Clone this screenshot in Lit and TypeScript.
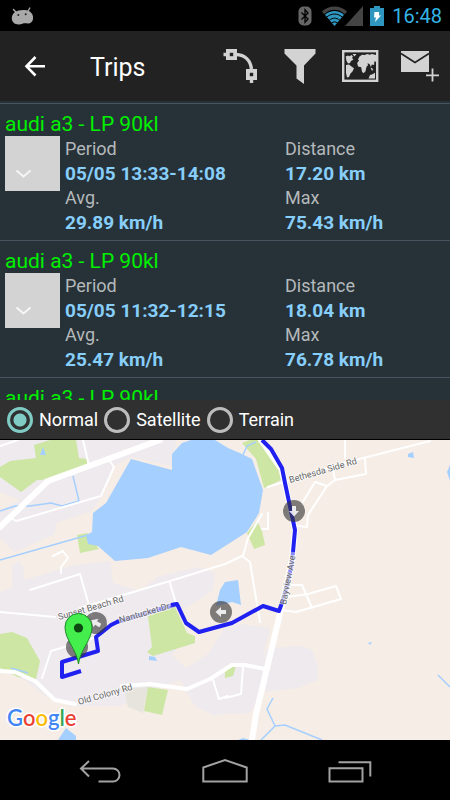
import { LitElement, html, css, svg } from "lit";
import { customElement, property, state } from "lit/decorators.js";

interface Trip {
  vehicle: string;
  period: string;
  distance: string;
  avg: string;
  max: string;
}

const TRIPS: Trip[] = [
  { vehicle: "audi a3 - LP 90kl", period: "05/05 13:33-14:08", distance: "17.20 km", avg: "29.89 km/h", max: "75.43 km/h" },
  { vehicle: "audi a3 - LP 90kl", period: "05/05 11:32-12:15", distance: "18.04 km", avg: "25.47 km/h", max: "76.78 km/h" },
  { vehicle: "audi a3 - LP 90kl", period: "", distance: "", avg: "", max: "" },
];

@customElement("status-bar")
export class StatusBar extends LitElement {
  static styles = css`
    :host { display: flex; align-items: center; height: 31px; padding: 0 8px 0 11px; background: #000; flex: none; }
    svg { display: block; flex: none; }
    .space { flex: 1; }
    .bt { margin-right: 10px; }
    .net { margin-right: 7px; }
    .bat { margin-right: 8px; }
    .clock { font: 20px/31px Roboto, sans-serif; color: #33b5e5; padding-top: 2px; }
  `;
  render() {
    return html`
      <svg width="23" height="20" viewBox="0 0 23 20" aria-hidden="true">
        <path d="M2.5 3.5 4.8 6M18.8 2 16.8 5.5" stroke="#a9a9a9" stroke-width="1.4" stroke-linecap="round" />
        <path d="M4 6C7 3.8 14 3.3 18 5c3 1.500 4.500 4.500 4 8-.5 3-2.500 4.600-5 4.500-1.500 0-2.500-.3-4-.2-1.500.3-3 1.400-5.500 1.200C3.500 18.300.8 16 .8 12 .8 9.500 2 7.500 4 6z" fill="#a9a9a9" />
        <circle cx="7.300" cy="9" r="1" fill="#222" /><circle cx="14.700" cy="8.300" r="1" fill="#222" />
      </svg>
      <span class="space"></span>
      <svg class="bt" width="14" height="20" viewBox="0 0 14 20" aria-hidden="true">
        <rect x=".5" y=".5" width="13" height="19" rx="5" fill="#666" />
        <path d="M3.500 6.500 10 13 7 16.300V3.700L10 7l-6.500 6.500" fill="none" stroke="#000" stroke-width="1.300" />
      </svg>
      <svg class="net" width="41" height="20" viewBox="0 0 41 20" aria-hidden="true">
        <path d="M0 5.500C7-1.200 18-1.200 25 5.500l-2.200 2.700C16.500 2.300 8.500 2.300 2.200 8.200z" fill="#444" />
        <path d="M3 8.700C8.500 3.800 16.500 3.800 22 8.700L12.500 20z" fill="#2f97bf" />
        <path d="M4.500 11.200c5-4.200 11-4.200 16 0M7.200 14.200c3.500-2.700 7-2.700 10.600 0M9.500 17c2-1.500 4-1.500 6 0" fill="none" stroke="#000" stroke-width="1" />
        <path d="M23 20 41 0v20z" fill="#444" />
      </svg>
      <svg class="bat" width="14" height="20" viewBox="0 0 14 20" aria-hidden="true">
        <path d="M4 0h6v2h4v18H0V2h4z" fill="#2f97bf" />
        <path d="M4.500 6h4.500v3.500h2L5 16l1-4.500H4z" fill="#fff" />
      </svg>
      <span class="clock">16:48</span>
    `;
  }
}

@customElement("app-header")
export class AppHeader extends LitElement {
  static styles = css`
    :host { display: flex; align-items: center; height: 70px; background: #222; flex: none; }
    button { border: 0; padding: 0; background: none; display: block; flex: none; height: 70px; }
    svg { display: block; }
    .back { width: 70px; }
    h1 { margin: 0; padding-left: 20px; flex: 1; font: 25px/32px Roboto, sans-serif; color: #fff; padding-top: 4px; }
  `;
  render() {
    return html`
      <button class="back" aria-label="Back">
        <svg width="70" height="70" viewBox="0 0 70 70">
          <path d="M45 35.300H27M35.500 26 26.500 35.300l9 9.200" fill="none" stroke="#fff" stroke-width="2.600" />
        </svg>
      </button>
      <h1>Trips</h1>
      <button aria-label="Route">
        <svg width="60" height="70" viewBox="0 0 60 70">
          <path d="M13.500 23.500h5M26 23.500c9 .3 14.500 6 15.500 14.500M41.500 48v4" fill="none" stroke="#d3d3d3" stroke-width="3.400" />
          <rect x="17.900" y="19.900" width="7.200" height="7.200" fill="none" stroke="#d3d3d3" stroke-width="3.800" />
          <rect x="37.900" y="39.900" width="7.200" height="7.200" fill="none" stroke="#d3d3d3" stroke-width="3.800" />
        </svg>
      </button>
      <button aria-label="Filter">
        <svg width="60" height="70" viewBox="0 0 60 70">
          <path d="M14.500 18h31v4.500L34 34.500V53l-7.500-5.500v-13L14.500 22.500z" fill="#d3d3d3" />
        </svg>
      </button>
      <button aria-label="Map">
        <svg width="60" height="70" viewBox="0 0 60 70">
          <rect x="13.200" y="20.200" width="34" height="29.600" fill="none" stroke="#d3d3d3" stroke-width="2.400" />
          <path d="M15.700 25.500 18 24.500l1.500.8 2-1.300 1.500 1.500-1 1.500 1.500 1.500-2.500 1.500-1 2-2 .5-1.500-2.500zM22.500 23h4l-2 2.500zM16 34l3-.5 2.500 2 2.500 1.800-1.500 3.200-2 2-1.500 3.500-2 .5-1-4.500zM28 28.500l1.500-3 2.500-1.800 2.500.3 3-1 2 .8 2.500-.8 4 1v7l-1.500-1-.5 4-2.200-.5-.8 2.500-1.500-3-2-.8.5 2-1.500 1.500-1 4.500-2 2-1.500-1.500-.8-4.500-3.200-.7-.8-3.500 1.800-2.500zM40.500 36.500l1.800.8 1 2-1.500.3zM38.500 47.500l1.500-3.500 2.500-.8 2.500-1.500v5.800z" fill="#d3d3d3" />
        </svg>
      </button>
      <button aria-label="New message">
        <svg width="60" height="70" viewBox="0 0 60 70">
          <path d="M11 20h28v21H11z" fill="#d3d3d3" />
          <path d="M11 22.500 25 31.500l14-9" fill="none" stroke="#222" stroke-width="1.600" />
          <path d="M42.500 37.500v13M36 44.300h13" stroke="#222" stroke-width="5" />
          <path d="M42.500 37.500v13M36 44.300h13" stroke="#d3d3d3" stroke-width="1.800" />
        </svg>
      </button>
    `;
  }
}

@customElement("trip-item")
export class TripItem extends LitElement {
  @property({ attribute: false }) trip!: Trip;
  static styles = css`
    :host { display: block; border-top: 1px solid #465560; padding: 8px 0 5px 5px; font-family: Roboto, sans-serif; }
    h2 { margin: 0; font-size: 21px; line-height: 24px; font-weight: 400; color: #00f000; }
    .body { display: flex; gap: 5px; }
    .thumb { width: 55px; height: 55px; flex: none; padding: 0; border: 0; background: #d3d3d3; }
    .thumb svg { display: block; }
    dl { flex: 1; margin: 0; padding-top: 1px; display: grid; grid-template-columns: 4fr 3fr; }
    dt { font-size: 18px; line-height: 24px; color: #b5b9bb; }
    dd { margin: 0; font-size: 19px; line-height: 25px; font-weight: 700; color: #87cefa; }
  `;
  render() {
    const t = this.trip;
    return html`
      <h2>${t.vehicle}</h2>
      ${t.period
        ? html`<div class="body">
            <button class="thumb" aria-label="Details">
              <svg width="55" height="55" viewBox="0 0 55 55">
                <path d="M11.500 34.500 18.500 40.500 25.500 34.500" fill="none" stroke="#f6f6f6" stroke-width="2" />
              </svg>
            </button>
            <dl>
              <div><dt>Period</dt><dd>${t.period}</dd></div>
              <div><dt>Distance</dt><dd>${t.distance}</dd></div>
              <div><dt>Avg.</dt><dd>${t.avg}</dd></div>
              <div><dt>Max</dt><dd>${t.max}</dd></div>
            </dl>
          </div>`
        : null}
    `;
  }
}

@customElement("map-type-bar")
export class MapTypeBar extends LitElement {
  @state() private selected = "Normal";
  static styles = css`
    :host { display: flex; align-items: center; gap: 6px; height: 39px; padding-left: 7px; background: #303030; border-bottom: 1px solid #000; flex: none; }
    label { display: flex; align-items: center; gap: 6px; font: 18px/28px Roboto, sans-serif; color: #fff; }
    input { appearance: none; margin: 0; width: 26px; height: 26px; border: 3px solid #bdbdbd; border-radius: 50%; box-sizing: border-box; }
    input:checked { border-color: #80cbc4; background: radial-gradient(circle, #80cbc4 6px, transparent 7px); }
  `;
  render() {
    return ["Normal", "Satellite", "Terrain"].map(
      (name) => html`<label>
        <input type="radio" name="type" .checked=${this.selected === name} @change=${() => (this.selected = name)} />${name}
      </label>`,
    );
  }
}

const arrow = (x: number, y: number, angle: number) => svg`
  <g transform="translate(${x} ${y}) rotate(${angle})">
    <circle r="11" fill="#333" fill-opacity=".62" />
    <path d="M-5.500 0 0-5v3h5v4H0v3z" fill="#fff" fill-opacity=".85" />
  </g>`;

@customElement("trip-map")
export class TripMap extends LitElement {
  static styles = css`
    :host { display: block; aspect-ratio: 3 / 2; flex: none; background: #f5ede6; }
    svg { display: block; width: 100%; height: 100%; }
    .grey { fill: #eeeaee; }
    .green { fill: #cde6a4; }
    .water { fill: #a5cfff; }
    .stream { fill: none; stroke: #a5cfff; stroke-width: 1.5; }
    .road { fill: none; stroke: #fff; stroke-linejoin: round; stroke-linecap: round; }
    .small { stroke-width: 2; }
    .mid { stroke-width: 4; }
    .big { stroke-width: 6; }
    .route { fill: none; stroke: #2020f0; stroke-width: 4; stroke-linejoin: round; }
    .name { font: 9px Roboto, sans-serif; fill: #666; stroke: #fff; stroke-width: 2px; stroke-opacity: .6; paint-order: stroke; }
    .logo { font: 600 22px Lato, sans-serif; stroke: #fff; stroke-width: 3px; paint-order: stroke; stroke-linejoin: round; }
    .b { fill: #4285f4; }
    .r { fill: #ea4335; }
    .y { fill: #fbbc05; }
    .g { fill: #34a853; }
  `;
  render() {
    return html`
      <svg viewBox="0 440 450 300" preserveAspectRatio="xMidYMid slice" role="img" aria-label="Trip map">
        <path class="grey" d="M0 440H176L172 466 131 457 114 466 103 495 90 512 56 523 55 534 15 552 0 538V510L20 500 0 492z" />
        <path class="grey" d="M0 592 12 588V566L18 561 23 566 24 580 75 565 110 561 113 583 140 591 158 577 180 571 200 567 215 573 213 590 190 606 176 612 188 634 240 624 270 628 262 660 268 648 300 646 312 650 318 668V680L298 688 282 690 262 692 250 713 225 714 215 716 195 706 180 680 150 690 120 706 70 706 45 696 25 680 0 670z" />
        <path fill="#f5ede6" d="M190 630 225 628 208 654 186 668 172 655z" />
        <path fill="#e7e4de" d="M124 689 148 687 143 713 128 707z" />
        <path class="green" d="M34 445 50 440H76L79 458 87 459 88 465 42 480 37 480 21 492 0 477V467L10 461 36 458z" />
        <path class="green" d="M77 535 87 533 99 549 80 553z" />
        <path class="green" d="M242 443 250 440H262L277 464 281 480 264 488 256 459z" />
        <path class="green" d="M247 533 257 521 262 531 265 545 254 549z" />
        <path class="green" d="M0 634 12 632 27 638 40 661 36 679 18 677 0 668z" />
        <path class="green" d="M148 616 175 607 187 633 195 636V643L153 656 147 652 152 647z" />
        <path class="green" d="M148 687 168 690 162 715 144 711z" />
        <path class="green" d="M225 668 236 666 233 676 225 678z" />
        <path class="water" d="M131 459 172 470V454L182 443 191 440H215L228 448 242 454 252 459 263 490 259 513 247 532 211 555 181 547 148 558 115 561 98 546 88 544 86 535 92 532 93 513 106 503z" />
        <path class="water" d="M43 447 46 455H40zM408 454 413 452 414 458 408 457zM450 465 447 472 450 481zM225 582 238 580 241 605 232 602 216 606 220 590zM149 656 155 657 157 661 149 660zM368 643 372 642 370 645zM66 728 76 736V740H58zM238 740 243 738 250 740z" />
        <path class="stream" d="M0 511 15 506H30L51 503 62 506 79 501 73 476M0 560 88 535M243 455 247 446 256 442M273 698 267 709 275 726 261 740M275 726 285 725 322 740M438 675 450 687M11 668 28 673" />
        <path class="road small" d="M0 446 18 440M83 440 89 466M109 460 114 467 101 496 16 521 11 518M53 556 63 551 68 558 61 567V573M30 590 80 574 92 616M0 612 55 617M80 608 170 581 225 564M170 583 176 604M345 440V458M268 487 340 464 430 441M365 458 366 474 335 480 327 486 308 515 307 527 298 526M327 486 315 482 301 505M333 470 335 480M225 564 242 556 250 562 256 598 260 622M262 514 248 538 243 556M262 529H268V513M288 585 302 585 312 608M287 597 308 594 336 586 341 599 296 612 281 610M51 651 68 646 100 636M51 651 42 678M225 698 241 694 243 668M213 680 219 699 228 696" />
        <path class="road mid" d="M0 671 15 672 35 681 55 700 75 704M122 686 150 684 187 689 210 679 232 665 245 665 265 669" />
        <path class="road big" d="M0 527 48 481 160 440M261 440 282 470 295 530 292 560 278 622 256 714 252 740" />
        <path class="route" d="M262 440 271 449 282 468 285 483 295 530 293 552" />
        <path class="route" d="M293 552 291 568 283 600" stroke-opacity=".55" />
        <path class="route" d="M117 622 177 604" stroke-opacity=".55" />
        <path class="route" d="M283 600 279 611 263 606 232 623 199 632 186 623 177 604 171 605M119 621 111 625 96 637 98 651 62 662V677L81 671" />
        <text class="name" transform="translate(290 483) rotate(-16)">Bethesda Side Rd</text>
        <text class="name" transform="translate(59 620) rotate(-16)">Sunset Beach Rd</text>
        <text class="name" transform="translate(120 623) rotate(-16)">Nantucket Dr</text>
        <text class="name" transform="translate(79 705) rotate(-16)">Old Colony Rd</text>
        <text class="name" transform="translate(286 605) rotate(-79)">Bayview Ave</text>
        ${arrow(294, 511, -90)} ${arrow(221, 612, 0)} ${arrow(96, 623, 30)} ${arrow(77, 647, 0)}
        <path d="M78.500 664C77 650 65 640 65 627a13.500 13.500 0 0 1 27 0c0 13-12 23-13.500 37z" fill="#44ee4c" stroke="#1d8a28" stroke-width="1" />
        <circle cx="78.500" cy="628" r="4.600" fill="#0c4a12" />
        <text class="logo" x="7" y="726"><tspan class="b">G</tspan><tspan class="r">o</tspan><tspan class="y">o</tspan><tspan class="b">g</tspan><tspan class="g">l</tspan><tspan class="r">e</tspan></text>
      </svg>
    `;
  }
}

@customElement("nav-bar")
export class NavBar extends LitElement {
  static styles = css`
    :host { display: grid; grid-template-columns: repeat(3, 1fr); padding: 0 37px; height: 60px; background: #000; flex: none; }
    button { border: 0; padding: 2px 0 0; background: none; display: grid; place-items: center; }
    svg { display: block; fill: none; stroke: #a2a2a2; stroke-width: 2; }
  `;
  render() {
    return html`
      <button aria-label="Back">
        <svg width="44" height="28" viewBox="0 0 44 28"><path d="M11 4 3 11.500l8 8M3 11.500h32a6.300 6.300 0 0 1 0 13H20.500" /></svg>
      </button>
      <button aria-label="Home">
        <svg width="48" height="28" viewBox="0 0 48 28"><path d="M2.300 24.500V10.500L24 3l21.700 7.500v14z" /></svg>
      </button>
      <button aria-label="Recent apps">
        <svg width="44" height="28" viewBox="0 0 44 28"><path d="M1.500 11.300h33v13.200h-33zM10.500 5.300h31.800V19.500" /></svg>
      </button>
    `;
  }
}

@customElement("app-root")
export class AppRoot extends LitElement {
  static styles = css`
    :host { display: flex; flex-direction: column; height: 100vh; overflow: hidden; background: #263238; }
    .list { flex: 1; min-height: 0; overflow: hidden; padding-top: 2px; background: #263238; }
  `;
  render() {
    return html`
      <status-bar></status-bar>
      <app-header></app-header>
      <main class="list">${TRIPS.map((t) => html`<trip-item .trip=${t}></trip-item>`)}</main>
      <map-type-bar></map-type-bar>
      <trip-map></trip-map>
      <nav-bar></nav-bar>
    `;
  }
}
